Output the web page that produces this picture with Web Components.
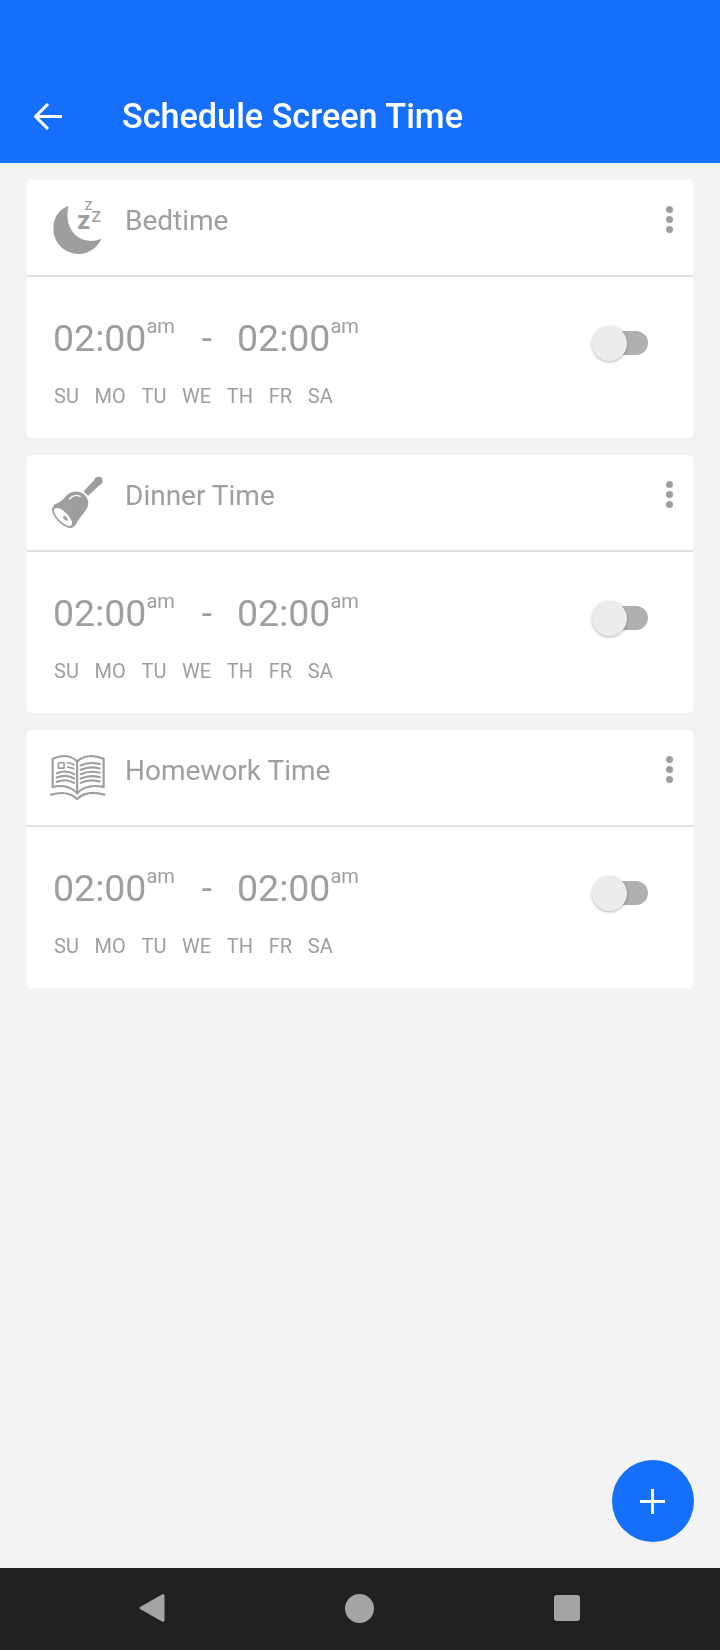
<!DOCTYPE html>
<html>
<head>
<meta charset="utf-8">
<title>Schedule Screen Time</title>
<style>
html, body { margin: 0; padding: 0; }
body { width: 720px; height: 1650px; background: #f3f3f3; font-family: Roboto, "Liberation Sans", sans-serif; }
</style>
</head>
<body>

<screen-time-app>
    <app-bar slot="top">Schedule Screen Time</app-bar>

    <schedule-card name="Bedtime">
        <svg slot="icon" viewBox="60 70 170 170" width="57" height="57" overflow="visible">
            <path fill="#9e9e9e" d="M115 94C85 105 70 130 70 162C70 205 105 237 145 237C175 237 200 220 214 191C195 201 170 200 150 190C122 176 105 140 115 94Z"/>
            <g fill="#9e9e9e" font-family="Roboto, sans-serif">
                <text x="141" y="163" font-size="76" font-weight="700">z</text>
                <text x="183" y="141" font-size="60" font-weight="400">z</text>
                <text x="163" y="105" font-size="48" font-weight="400">z</text>
            </g>
        </svg>
    </schedule-card>

    <schedule-card name="Dinner Time">
        <svg slot="icon" viewBox="60 40 170 170" width="57" height="57">
            <circle cx="205" cy="63" r="12" fill="#9e9e9e"/>
            <path fill="#9e9e9e" d="M197 55L213 71L174 108L160 95Z"/>
            <path fill="#9e9e9e" d="M70 135C88 130 100 118 110 106C125 92 150 92 164 106C177 120 177 136 167 150C155 168 142 180 135 197L100 185Z"/>
            <ellipse cx="100" cy="170" rx="43" ry="21" transform="rotate(45 100 170)" fill="#9e9e9e"/>
            <ellipse cx="99" cy="171" rx="35" ry="14.5" transform="rotate(45 99 171)" fill="#fff"/>
            <ellipse cx="106" cy="175" rx="9" ry="4.5" transform="rotate(45 106 175)" fill="#9e9e9e"/>
            <path fill="none" stroke="#fff" stroke-width="4" stroke-linecap="round" d="M118 118C126 106 140 104 150 110"/>
        </svg>
    </schedule-card>

    <schedule-card name="Homework Time">
        <svg slot="icon" viewBox="60 40 170 170" width="57" height="57">
            <g fill="none" stroke="#9e9e9e" stroke-width="6.5" stroke-linecap="round" stroke-linejoin="round">
                <path d="M68 156V72C95 60 122 62 141 80C160 62 190 60 220 72V156C190 150 160 154 141 175C122 154 95 150 68 156Z"/>
                <path d="M141 80V175"/>
                <path d="M63 179C95 170 122 174 141 192C160 174 190 170 222 179"/>
                <path stroke-width="5" d="M85 84H102V100H85Z"/>
                <path stroke-width="5" d="M112 84Q122 84 131 90M112 97Q122 97 131 102"/>
                <path d="M80 115Q108 104 132 118M80 128Q108 117 132 131M80 141Q108 130 132 144"/>
                <path d="M152 92Q178 80 208 88M152 105Q178 93 208 101M152 118Q178 106 208 114M152 131Q178 119 208 127M152 144Q178 132 208 140"/>
            </g>
        </svg>
    </schedule-card>

    <add-button slot="over"></add-button>
    <nav-bar slot="bottom"></nav-bar>
</screen-time-app>

<script>
class ScreenTimeApp extends HTMLElement{
    connectedCallback(){
        this.attachShadow({mode:'open'}).innerHTML = `
        <slot name="top"></slot>
        <main><slot></slot></main>
        <slot name="over"></slot>
        <slot name="bottom"></slot>
        <style>
        :host {
            display: flex;
            flex-direction: column;
            position: relative;
            width: 720px;
            height: 1650px;
            background: #f3f3f3;
        }
        main {
            flex: 1;
            display: flex;
            flex-direction: column;
            gap: 17px;
            padding: 17px 27px 0;
        }
        </style>
        `
    }
}


class AppBar extends HTMLElement{
    connectedCallback(){
        this.attachShadow({mode:'open'}).innerHTML = `
        <svg viewBox="0 0 28 27" width="28" height="27">
            <path d="M1.5 13.5H28M14 1L1.5 13.5L14 26" fill="none" stroke="#fff" stroke-width="3"/>
        </svg>
        <h1><slot></slot></h1>
        <style>
        :host {
            display: flex;
            align-items: center;
            gap: 60px;
            height: 163px;
            box-sizing: border-box;
            padding: 69px 0 0 34px;
            background: #166ffb;
            color: #fff;
        }
        svg { flex: none; }
        h1 {
            margin: 0;
            font: 500 34.2px/56px Roboto, sans-serif;
            will-change: opacity; /* grayscale text edges */
        }
        </style>
        `
    }
}


class ScheduleCard extends HTMLElement{
    connectedCallback(){
        const days = ['SU','MO','TU','WE','TH','FR','SA']
        this.attachShadow({mode:'open'}).innerHTML = `
        <header>
            <span id="icon"><slot name="icon"></slot></span>
            <span id="name"><span>${this.getAttribute('name')}</span></span>
            <span id="dots"><i></i><i></i><i></i></span>
        </header>
        <section>
            <div id="info">
                <div id="times">
                    <time-value>02:00</time-value>
                    <span id="dash">-</span>
                    <time-value>02:00</time-value>
                </div>
                <div id="days">${days.map(d => `<span>${d}</span>`).join('')}</div>
            </div>
            <toggle-switch></toggle-switch>
        </section>
        <style>
        :host {
            display: block;
            height: 258px;
            background: #fff;
            border-radius: 4px;
            color: #9e9e9e;
        }
        header {
            display: flex;
            height: 95px;
            box-sizing: border-box;
        }
        #icon {
            flex: none;
            width: 57px;
            height: 57px;
            margin: 18px 0 0 23px;
        }
        #name {
            flex: 1;
            margin: 22px 0 0 18px;
            font-size: 28px;
            line-height: 38px;
            will-change: opacity;
        }
        #dots {
            flex: none;
            display: flex;
            flex-direction: column;
            gap: 3px;
            margin: 26px 20px 0 0;
        }
        #dots i {
            width: 7px;
            height: 7px;
            border-radius: 50%;
            background: #9e9e9e;
        }
        section {
            display: flex;
            justify-content: space-between;
            border-top: 2px solid #e0e0e0;
            padding: 0 45px 0 26px;
        }
        #times {
            display: flex;
            align-items: baseline;
            margin-top: 39px;
            height: 56px;
            will-change: opacity;
        }
        #dash {
            margin: 0 25px 0 27px;
            font-size: 37px;
        }
        #days {
            display: flex;
            gap: 15.7px;
            margin: 12px 0 0 1px;
            font-size: 20px;
            line-height: 24px;
            will-change: opacity;
        }
        toggle-switch { margin-top: 49px; }
        </style>
        `
    }
}


class TimeValue extends HTMLElement{
    connectedCallback(){
        this.attachShadow({mode:'open'}).innerHTML = `
        <slot></slot><sup>am</sup>
        <style>
        :host {
            display: inline-block;
            font-size: 37.5px;
            line-height: 44px;
            white-space: nowrap;
        }
        sup {
            font-size: 20px;
            line-height: 0;
            vertical-align: 18px;
        }
        </style>
        `
    }
}


class ToggleSwitch extends HTMLElement{
    connectedCallback(){
        this.attachShadow({mode:'open'}).innerHTML = `
        <div id="track"></div>
        <div id="thumb"></div>
        <style>
        :host {
            display: block;
            position: relative;
            width: 56px;
            height: 35px;
        }
        #track {
            position: absolute;
            left: 8px;
            right: 0;
            top: 5px;
            height: 24px;
            border-radius: 12px;
            background: #b0b0b0;
        }
        #thumb {
            position: absolute;
            left: 0;
            top: 0;
            width: 35px;
            height: 35px;
            border-radius: 50%;
            background: #ececec;
            box-shadow: 0 1px 3px rgba(0,0,0,.3);
        }
        </style>
        `
    }
}


class AddButton extends HTMLElement{
    connectedCallback(){
        this.attachShadow({mode:'open'}).innerHTML = `
        <svg viewBox="0 0 25 25" width="25" height="25">
            <path d="M12.5 0V25M0 12.5H25" stroke="#fff" stroke-width="2.8"/>
        </svg>
        <style>
        :host {
            position: absolute;
            left: 612px;
            top: 1460px;
            width: 82px;
            height: 82px;
            border-radius: 50%;
            background: #166ffb;
            display: flex;
            align-items: center;
            justify-content: center;
        }
        svg { margin-left: -1px; }
        </style>
        `
    }
}


class NavBar extends HTMLElement{
    connectedCallback(){
        this.attachShadow({mode:'open'}).innerHTML = `
        <svg viewBox="0 0 26 30" width="26" height="30">
            <path d="M23 1.5C24 1 25.5 1.5 25.5 3V27C25.5 28.5 24 29 23 28.5L1.5 16.2C.3 15.5 .3 14.5 1.5 13.8Z" fill="#a4a4a4"/>
        </svg>
        <svg viewBox="0 0 29 29" width="29" height="29">
            <circle cx="14.5" cy="14.5" r="14.5" fill="#a4a4a4"/>
        </svg>
        <svg viewBox="0 0 26 26" width="26" height="26">
            <rect width="26" height="26" rx="3" fill="#a4a4a4"/>
        </svg>
        <style>
        :host {
            display: flex;
            align-items: center;
            justify-content: center;
            gap: 180px;
            height: 82px;
            background: #212121;
            padding: 0 1px 2px 0;
            box-sizing: border-box;
        }
        </style>
        `
    }
}


customElements.define('screen-time-app', ScreenTimeApp)
customElements.define('app-bar', AppBar)
customElements.define('schedule-card', ScheduleCard)
customElements.define('time-value', TimeValue)
customElements.define('toggle-switch', ToggleSwitch)
customElements.define('add-button', AddButton)
customElements.define('nav-bar', NavBar)
</script>
</body>
</html>
